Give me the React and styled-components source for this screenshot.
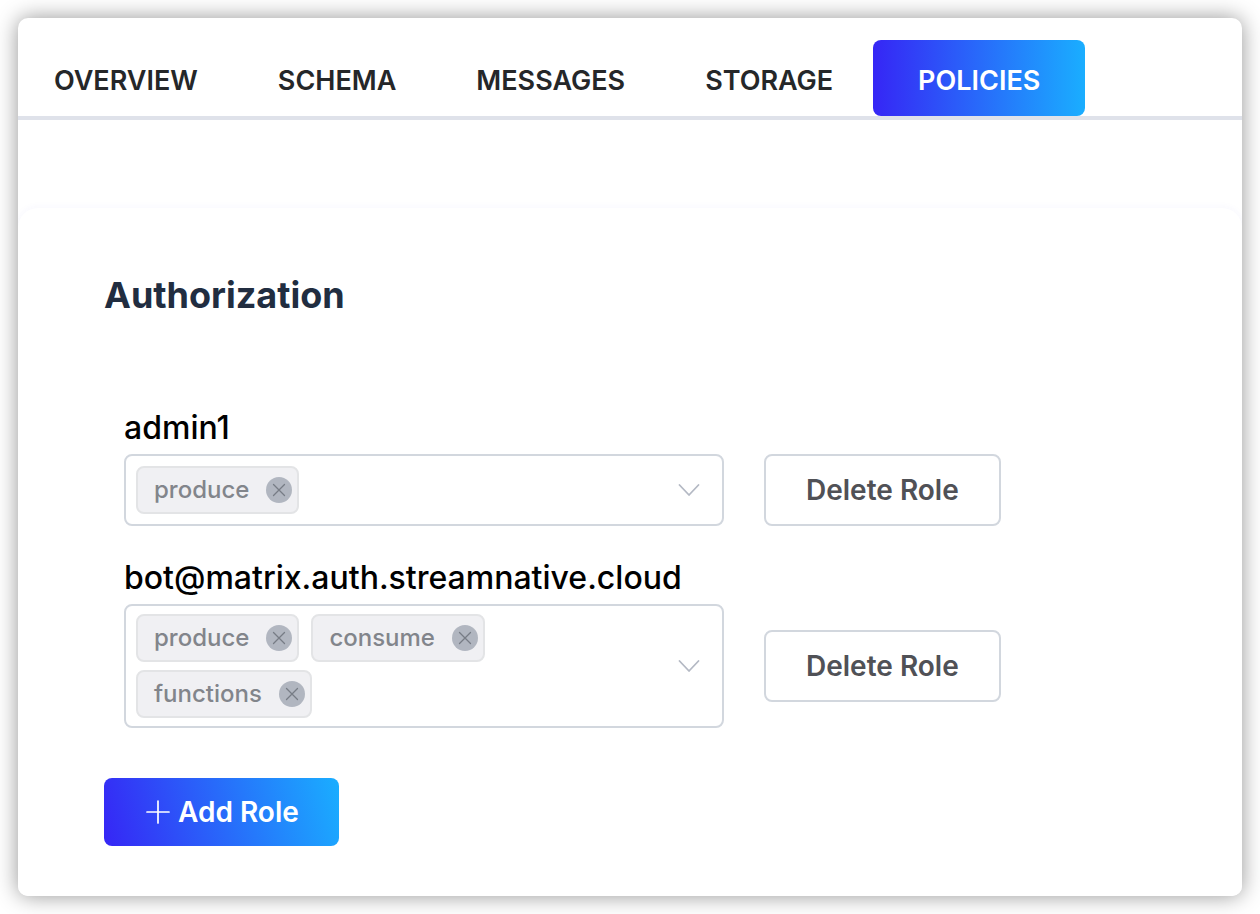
import React from "react";
import styled, { createGlobalStyle } from "styled-components";

const GlobalStyle = createGlobalStyle`
  *, *::before, *::after { box-sizing: border-box; }
  body {
    margin: 0;
    background: #ffffff;
    font-family: Inter, "Liberation Sans", sans-serif;
  }
  button { font-family: inherit; cursor: pointer; margin: 0; }
`;

const Window = styled.main`
  margin: 18px;
  border-radius: 10px;
  overflow: hidden;
  background: #ffffff;
  box-shadow: 0 0 22px rgba(0, 0, 0, 0.42);
`;

const TabBar = styled.div`
  display: flex;
  padding-top: 22px;
  border-bottom: 4px solid #dfe2ea;
`;

const Tab = styled.button`
  height: 76px;
  min-width: ${(p) => (p["aria-selected"] ? "212px" : "0")};
  padding: 6px 40px 0;
  border: 0;
  border-radius: 8px;
  font-size: 27px;
  font-weight: 600;
  line-height: 36px;
  color: ${(p) => (p["aria-selected"] ? "#ffffff" : "#252729")};
  background: ${(p) =>
    p["aria-selected"] ? "linear-gradient(90deg, #3626f5, #1aaeff)" : "transparent"};

  &:first-child { padding-left: 36px; }
`;

const Panel = styled.section`
  margin-top: 88px;
  padding: 65px 86px 50px;
  border-radius: 20px 20px 0 0;
  background: #ffffff;
  box-shadow: 0 0 8px rgba(60, 60, 220, 0.05);
`;

const Heading = styled.h2`
  margin: 0;
  font-size: 36px;
  font-weight: 700;
  line-height: 44px;
  color: #212d40;
`;

const RoleList = styled.div`
  display: grid;
  gap: 30px;
  padding: 89px 20px 50px;
`;

const RoleName = styled.h3`
  margin: 0 0 4px;
  font-size: 32px;
  font-weight: 500;
  line-height: 44px;
  color: #000000;
`;

const RoleRow = styled.div`
  display: flex;
  align-items: center;
  gap: 40px;
`;

const TagSelect = styled.div`
  flex: 0 1 600px;
  display: flex;
  align-items: center;
  min-height: 72px;
  padding: 8px 10px;
  border: 2px solid #d2d7de;
  border-radius: 8px;
`;

const Tags = styled.div`
  flex: 1;
  display: flex;
  flex-wrap: wrap;
  gap: 8px 12px;
`;

const Tag = styled.span`
  display: flex;
  align-items: center;
  gap: 17px;
  height: 48px;
  padding: 0 5px 0 16px;
  border: 2px solid #e3e4e6;
  border-radius: 8px;
  background: #f0f0f3;
  color: #82858b;
  font-size: 24px;
  font-weight: 500;
  line-height: 28px;
`;

const RemoveButton = styled.button`
  display: flex;
  width: 26px;
  height: 26px;
  padding: 0;
  border: 0;
  border-radius: 50%;
  background: #b1b6c0;
  color: #777c85;
`;

const CaretButton = styled.button`
  display: flex;
  justify-content: flex-end;
  width: 48px;
  padding: 0 12px 0 0;
  border: 0;
  background: transparent;
  color: #b4b9c4;
`;

const OutlineButton = styled.button`
  height: 72px;
  padding: 0 40px;
  border: 2px solid #d2d7de;
  border-radius: 8px;
  background: #ffffff;
  color: #505156;
  font-size: 28px;
  font-weight: 600;
  white-space: nowrap;
`;

const PrimaryButton = styled.button`
  display: flex;
  align-items: center;
  gap: 8px;
  height: 68px;
  padding: 0 40px;
  border: 0;
  border-radius: 8px;
  background: linear-gradient(75deg, #3626f5, #1aaeff);
  color: #ffffff;
  font-size: 28px;
  font-weight: 600;
  white-space: nowrap;
`;

const CrossIcon = () => (
  <svg width="26" height="26" viewBox="0 0 26 26" fill="none" stroke="currentColor" strokeWidth="1.3" strokeLinecap="round" aria-hidden="true">
    <path d="M7.500 7.500l11 11M18.500 7.500l-11 11" />
  </svg>
);

const CaretIcon = () => (
  <svg width="22" height="14" viewBox="0 0 22 14" fill="none" stroke="currentColor" strokeWidth="1.8" strokeLinecap="round" strokeLinejoin="round" aria-hidden="true">
    <path d="M1.500 2L11 12L20.500 2" />
  </svg>
);

const PlusIcon = () => (
  <svg width="26" height="26" viewBox="0 0 26 26" fill="none" stroke="currentColor" strokeWidth="1.7" strokeLinecap="round" aria-hidden="true">
    <path d="M14 2v22M3 13h22" />
  </svg>
);

const tabs = ["OVERVIEW", "SCHEMA", "MESSAGES", "STORAGE", "POLICIES"];

const initialRoles = [
  { name: "admin1", actions: ["produce"] },
  { name: "bot@matrix.auth.streamnative.cloud", actions: ["produce", "consume", "functions"] },
];

function Role({ name, actions }) {
  return (
    <div>
      <RoleName id={`role-${name}`}>{name}</RoleName>
      <RoleRow>
        <TagSelect role="group" aria-labelledby={`role-${name}`}>
          <Tags>
            {actions.map((action) => (
              <Tag key={action}>
                {action}
                <RemoveButton type="button" aria-label={`Remove ${action}`}>
                  <CrossIcon />
                </RemoveButton>
              </Tag>
            ))}
          </Tags>
          <CaretButton type="button" aria-haspopup="listbox" aria-label="Show actions">
            <CaretIcon />
          </CaretButton>
        </TagSelect>
        <OutlineButton type="button">Delete Role</OutlineButton>
      </RoleRow>
    </div>
  );
}

export default function App() {
  const [active, setActive] = React.useState("POLICIES");
  return (
    <>
      <GlobalStyle />
      <Window>
        <TabBar role="tablist">
          {tabs.map((tab) => (
            <Tab key={tab} type="button" role="tab" aria-selected={tab === active} onClick={() => setActive(tab)}>
              {tab}
            </Tab>
          ))}
        </TabBar>
        <Panel>
          <Heading>Authorization</Heading>
          <RoleList>
            {initialRoles.map((role) => (
              <Role key={role.name} {...role} />
            ))}
          </RoleList>
          <PrimaryButton type="button">
            <PlusIcon />
            Add Role
          </PrimaryButton>
        </Panel>
      </Window>
    </>
  );
}
